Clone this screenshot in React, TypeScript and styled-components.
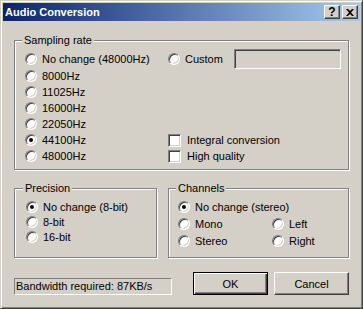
import React from 'react';
import styled, { createGlobalStyle } from 'styled-components';

const Global = createGlobalStyle`
  html, body { margin: 0; padding: 0; background: #d4d0c8; }
  body {
    font-family: "Liberation Sans", Arial, sans-serif;
    font-size: 11px;
    color: #000;
  }
`;

const Window = styled.div`
  width: 363px;
  height: 309px;
  box-sizing: border-box;
  border: 1px solid;
  border-color: #d4d0c8 #404040 #404040 #d4d0c8;
  box-shadow: inset 1px 1px 0 #fff, inset -1px -1px 0 #808080;
  padding: 2px;
  background: #d4d0c8;
  display: flex;
  flex-direction: column;
`;

const TitleBar = styled.div`
  height: 18px;
  flex: none;
  display: flex;
  align-items: center;
  padding: 0 2px;
  background: linear-gradient(to right, #0a246a, #a6caf0);
  color: #fff;
  font-weight: bold;
  font-size: 11px;
  line-height: 18px;
`;

const TitleText = styled.span`
  white-space: nowrap;
`;

const CaptionButtons = styled.div`
  margin-left: auto;
  display: flex;
  gap: 2px;
`;

const CaptionButton = styled.div`
  width: 16px;
  height: 14px;
  box-sizing: border-box;
  border: 1px solid;
  border-color: #fff #404040 #404040 #fff;
  box-shadow: inset -1px -1px 0 #808080;
  background: #d4d0c8;
  display: flex;
  align-items: center;
  justify-content: center;
  color: #000;
  font-weight: bold;
  font-size: 12px;
  line-height: 12px;
`;

const Content = styled.div`
  flex: 1;
  display: flex;
  flex-direction: column;
  padding: 19px 11px 11px 11px;
`;

const Group = styled.div`
  position: relative;
  box-sizing: border-box;
  border: 1px solid #808080;
  box-shadow: inset 1px 1px 0 #fff, 1px 1px 0 #fff;
`;

const GroupLabel = styled.span<{ $left: number }>`
  position: absolute;
  top: -7px;
  left: ${p => p.$left}px;
  padding: 0 2px;
  line-height: 13px;
  background: #d4d0c8;
  white-space: nowrap;
`;

const SamplingGroup = styled(Group)`
  height: 130px;
  padding: 10px 0 0 10px;
  display: grid;
  grid-template-columns: 143px 1fr;
  grid-template-rows: 16px 17px 15px 17px 16px 16px 16px;
  align-content: start;
`;

const Cell = styled.div<{ $row: number; $col: number }>`
  grid-row: ${p => p.$row};
  grid-column: ${p => p.$col};
  display: flex;
  align-items: center;
  white-space: nowrap;
  line-height: 16px;
`;

const GroupRow = styled.div`
  display: flex;
  gap: 11px;
  margin-top: 18px;
  height: 70px;
`;

const PrecisionGroup = styled(Group)`
  width: 143px;
  padding: 10px 0 0 11px;
  display: grid;
  grid-template-rows: repeat(3, 15px);
  align-content: start;
`;

const ChannelsGroup = styled(Group)`
  flex: 1;
  padding: 10px 0 0 9px;
  display: grid;
  grid-template-columns: 94px 1fr;
  grid-template-rows: 16px 17px 17px;
  align-content: start;
`;

const RadioCircle = styled.span<{ $checked?: boolean }>`
  width: 12px;
  height: 12px;
  box-sizing: border-box;
  flex: none;
  border-radius: 50%;
  border: 1px solid;
  border-color: #808080 #fff #fff #808080;
  background: #fff;
  box-shadow: inset 1px 1px 0 #404040, inset -1px -1px 0 #d4d0c8;
  margin-right: 5px;
  display: flex;
  align-items: center;
  justify-content: center;
  &::after {
    content: '';
    display: ${p => (p.$checked ? 'block' : 'none')};
    width: 4px;
    height: 4px;
    border-radius: 50%;
    background: #000;
  }
`;

const CheckBox = styled.span`
  width: 13px;
  height: 13px;
  box-sizing: border-box;
  flex: none;
  border: 1px solid;
  border-color: #808080 #fff #fff #808080;
  background: #fff;
  box-shadow: inset 1px 1px 0 #404040, inset -1px -1px 0 #d4d0c8;
  margin-right: 6px;
`;

const EditBox = styled.div`
  width: 107px;
  height: 20px;
  box-sizing: border-box;
  flex: none;
  margin-left: auto;
  margin-right: 7px;
  border: 1px solid;
  border-color: #808080 #fff #fff #808080;
  box-shadow: inset 1px 1px 0 #404040, inset -1px -1px 0 #d4d0c8;
  background: #d4d0c8;
`;

const BottomRow = styled.div`
  margin-top: auto;
  display: flex;
  align-items: flex-end;
`;

const StatusBox = styled.div`
  width: 158px;
  height: 17px;
  box-sizing: border-box;
  border: 1px solid;
  border-color: #808080 #fff #fff #808080;
  padding-left: 1px;
  line-height: 15px;
  white-space: nowrap;
`;

const Buttons = styled.div`
  margin-left: auto;
  display: flex;
  gap: 6px;
`;

const PushButton = styled.button<{ $default?: boolean }>`
  width: 75px;
  height: 23px;
  box-sizing: border-box;
  padding: 0;
  margin: 0;
  font-family: inherit;
  font-size: 11px;
  color: #000;
  background: #d4d0c8;
  border: 1px solid;
  border-color: ${p => (p.$default ? '#000' : '#fff #404040 #404040 #fff')};
  box-shadow: ${p =>
    p.$default
      ? 'inset 1px 1px 0 #fff, inset -1px -1px 0 #404040, inset -2px -2px 0 #808080'
      : 'inset -1px -1px 0 #808080'};
`;

const Radio = ({ checked, children }: { checked?: boolean; children: React.ReactNode }) => (
  <>
    <RadioCircle $checked={checked} />
    <span>{children}</span>
  </>
);

const rates = ['No change (48000Hz)', '8000Hz', '11025Hz', '16000Hz', '22050Hz', '44100Hz', '48000Hz'];

export default function App() {
  return (
    <>
      <Global />
      <Window>
        <TitleBar>
          <TitleText>Audio Conversion</TitleText>
          <CaptionButtons>
            <CaptionButton>?</CaptionButton>
            <CaptionButton>
              <svg width="8" height="7" viewBox="0 0 8 7">
                <path d="M0 0h2l2 2 2-2h2L5 3.5 8 7H6L4 5 2 7H0l3-3.5z" fill="#000" />
              </svg>
            </CaptionButton>
          </CaptionButtons>
        </TitleBar>
        <Content>
          <SamplingGroup>
            <GroupLabel $left={7}>Sampling rate</GroupLabel>
            {rates.map((r, i) => (
              <Cell key={r} $row={i + 1} $col={1}>
                <Radio checked={r === '44100Hz'}>{r}</Radio>
              </Cell>
            ))}
            <Cell $row={1} $col={2}>
              <Radio>Custom</Radio>
              <EditBox />
            </Cell>
            <Cell $row={6} $col={2}>
              <CheckBox />
              <span>Integral conversion</span>
            </Cell>
            <Cell $row={7} $col={2}>
              <CheckBox />
              <span>High quality</span>
            </Cell>
          </SamplingGroup>
          <GroupRow>
            <PrecisionGroup>
              <GroupLabel $left={8}>Precision</GroupLabel>
              <Cell $row={1} $col={1}>
                <Radio checked>No change (8-bit)</Radio>
              </Cell>
              <Cell $row={2} $col={1}>
                <Radio>8-bit</Radio>
              </Cell>
              <Cell $row={3} $col={1}>
                <Radio>16-bit</Radio>
              </Cell>
            </PrecisionGroup>
            <ChannelsGroup>
              <GroupLabel $left={7}>Channels</GroupLabel>
              <Cell $row={1} $col={1}>
                <Radio checked>No change (stereo)</Radio>
              </Cell>
              <Cell $row={2} $col={1}>
                <Radio>Mono</Radio>
              </Cell>
              <Cell $row={3} $col={1}>
                <Radio>Stereo</Radio>
              </Cell>
              <Cell $row={2} $col={2}>
                <Radio>Left</Radio>
              </Cell>
              <Cell $row={3} $col={2}>
                <Radio>Right</Radio>
              </Cell>
            </ChannelsGroup>
          </GroupRow>
          <BottomRow>
            <StatusBox>Bandwidth required: 87KB/s</StatusBox>
            <Buttons>
              <PushButton $default>OK</PushButton>
              <PushButton>Cancel</PushButton>
            </Buttons>
          </BottomRow>
        </Content>
      </Window>
    </>
  );
}
